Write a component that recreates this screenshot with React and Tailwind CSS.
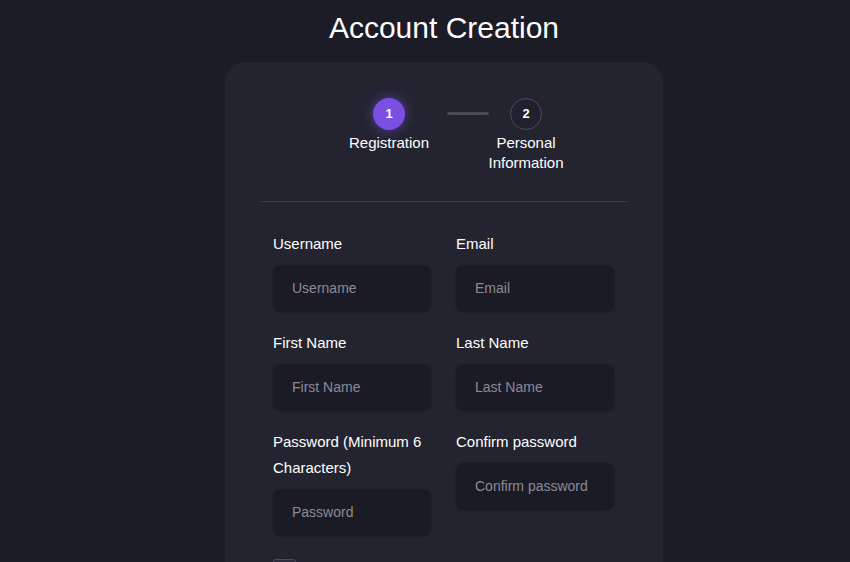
import React, { useState } from "react";

const Field = ({ label, placeholder, type = "text", value, onChange }) => (
  <div className="flex flex-col">
    <label className="text-[15px] leading-[26px] font-medium text-white mb-2">{label}</label>
    <input
      type={type}
      value={value}
      onChange={onChange}
      placeholder={placeholder}
      className="h-[46px] w-full rounded-lg bg-[#1b1b26] px-[19px] text-[14px] text-white placeholder-[#8a8a96] outline-none shadow-[0_1px_3px_rgba(0,0,0,0.35)]"
    />
  </div>
);

const App = () => {
  const [form, setForm] = useState({
    username: "",
    email: "",
    firstName: "",
    lastName: "",
    password: "",
    confirm: "",
  });
  const [agree, setAgree] = useState(false);

  const set = (k) => (e) => setForm({ ...form, [k]: e.target.value });

  return (
    <div
      className="w-full min-h-screen bg-[#1c1c27] text-white flex flex-col items-center pl-[38px]"
      style={{ fontFamily: '"Liberation Sans", Arial, sans-serif' }}
    >
      {/* ===== Title ===== */}
      <h1 className="h-[54px] flex items-center text-[30px] font-normal">Account Creation</h1>

      {/* ===== Card ===== */}
      <div className="mt-2 w-[438px] rounded-[20px] bg-[#242431] pt-9 pb-10">
        {/* stepper */}
        <div className="flex justify-center pl-[24px]">
          <div className="w-[80px] flex flex-col items-center">
            <div className="w-8 h-8 rounded-full bg-[#7b4fe3] flex items-center justify-center text-[13px] font-bold shadow-[0_0_12px_rgba(123,79,227,0.6)]">
              1
            </div>
            <span className="mt-[3px] text-[15px] leading-5">Registration</span>
          </div>
          <div className="ml-[18px] mt-[14px] w-[42px] h-[3px] rounded bg-[#4a4a56]" />
          <div className="w-[74px] flex flex-col items-center">
            <div className="w-8 h-8 rounded-full border border-[#4b4b5c] bg-[#20202e] flex items-center justify-center text-[13px] font-bold">
              2
            </div>
            <span className="mt-[3px] text-[15px] leading-5 text-center">
              Personal
              <br />
              Information
            </span>
          </div>
        </div>

        <div className="mx-9 mt-7 h-px bg-[#3a3a48]" />

        {/* form */}
        <div className="pl-12 mt-[29px] grid grid-cols-[158px_158px] gap-x-[25px] gap-y-[19px] items-start">
          <Field label="Username" placeholder="Username" value={form.username} onChange={set("username")} />
          <Field label="Email" placeholder="Email" type="email" value={form.email} onChange={set("email")} />
          <Field label="First Name" placeholder="First Name" value={form.firstName} onChange={set("firstName")} />
          <Field label="Last Name" placeholder="Last Name" value={form.lastName} onChange={set("lastName")} />
          <Field
            label="Password (Minimum 6 Characters)"
            placeholder="Password"
            type="password"
            value={form.password}
            onChange={set("password")}
          />
          <Field
            label="Confirm password"
            placeholder="Confirm password"
            type="password"
            value={form.confirm}
            onChange={set("confirm")}
          />
        </div>

        <label className="px-12 mt-[23px] flex items-start gap-[9px] text-[14px] leading-5 text-[#a3a3ae]">
          <input
            type="checkbox"
            checked={agree}
            onChange={(e) => setAgree(e.target.checked)}
            className="mt-[1px] w-[23px] h-[16px] shrink-0 appearance-none rounded-[3px] border border-[#4a4a58] bg-[#2c2c3a]"
          />
          <span>By clicking this box, you acknowledge that you have read and agree to our terms of service.</span>
        </label>
      </div>
    </div>
  );
};

export default App;
